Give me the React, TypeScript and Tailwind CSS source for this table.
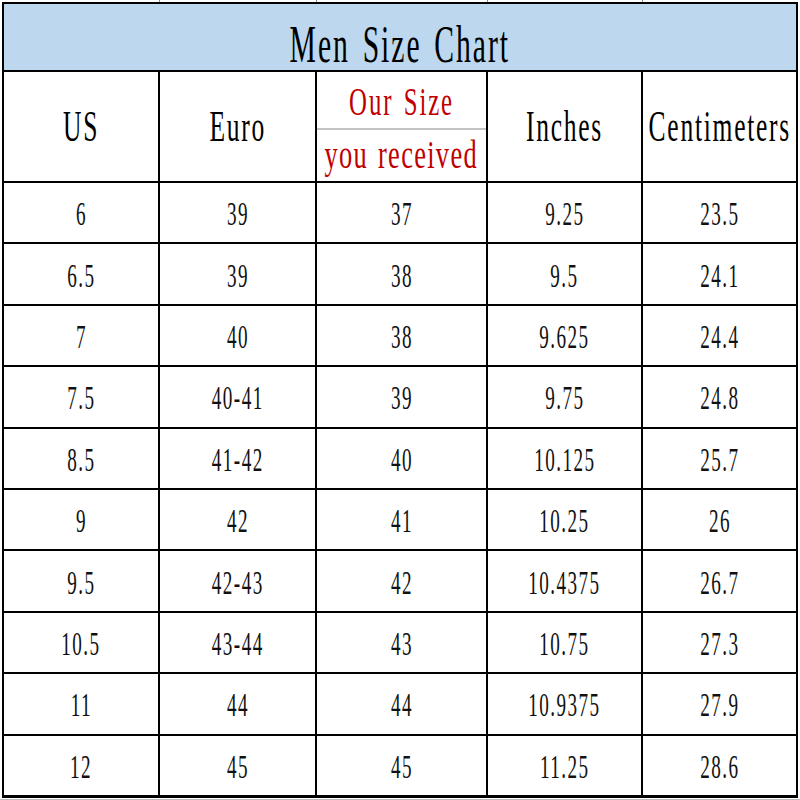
import React from "react";

const rows: string[][] = [
  ["6", "39", "37", "9.25", "23.5"],
  ["6.5", "39", "38", "9.5", "24.1"],
  ["7", "40", "38", "9.625", "24.4"],
  ["7.5", "40-41", "39", "9.75", "24.8"],
  ["8.5", "41-42", "40", "10.125", "25.7"],
  ["9", "42", "41", "10.25", "26"],
  ["9.5", "42-43", "42", "10.4375", "26.7"],
  ["10.5", "43-44", "43", "10.75", "27.3"],
  ["11", "44", "44", "10.9375", "27.9"],
  ["12", "45", "45", "11.25", "28.6"],
];

const font = { fontFamily: '"Liberation Serif", "Times New Roman", serif' };

export default function App() {
  return (
    <div className="w-[800px] h-[800px] bg-white relative overflow-hidden">
      <div className="absolute left-[159px] top-0 w-[1px] h-[2px] bg-[#888]" />
      <div className="absolute left-[316px] top-0 w-[1px] h-[2px] bg-[#888]" />
      <div className="absolute left-[487px] top-0 w-[1px] h-[2px] bg-[#888]" />
      <div className="absolute left-[642px] top-0 w-[1px] h-[2px] bg-[#888]" />
      <div className="pt-[2px] pl-[2px]">
        <div
          className="w-[796px] h-[796px] bg-black pt-[2px] pl-[2px] pr-[2px] pb-[3px] grid grid-cols-[154px_155px_169px_153px_153px] grid-rows-[66px_109px_repeat(10,1fr)] gap-[2px]"
          style={font}
        >
          <div className="col-span-5 bg-[#bdd7ee] flex items-center justify-center pt-[14px]">
            <span className="inline-block scale-x-[0.56] text-[53px] leading-none text-black whitespace-nowrap tracking-[3.5px] [word-spacing:6px]">
              Men Size Chart
            </span>
          </div>
          {["US", "Euro"].map((h) => (
            <div key={h} className="bg-white flex items-center justify-center">
              <span className="inline-block scale-x-[0.58] text-[44px] leading-none text-black whitespace-nowrap tracking-[3px]">
                {h}
              </span>
            </div>
          ))}
          <div className="bg-white flex flex-col">
            <div className="flex-1 flex items-center justify-center pt-[4px]">
              <span className="inline-block scale-x-[0.62] text-[40px] leading-none text-[#c00000] whitespace-nowrap tracking-[3px] [word-spacing:4px]">
                Our Size
              </span>
            </div>
            <div className="h-[2px] bg-[#c4c4c4]" />
            <div className="flex-1 flex items-center justify-center">
              <span className="inline-block scale-x-[0.66] text-[40px] leading-none text-[#c00000] whitespace-nowrap tracking-[2px] [word-spacing:3px]">
                you received
              </span>
            </div>
          </div>
          {["Inches", "Centimeters"].map((h) => (
            <div key={h} className="bg-white flex items-center justify-center">
              <span className="inline-block scale-x-[0.58] text-[44px] leading-none text-black whitespace-nowrap tracking-[3px]">
                {h}
              </span>
            </div>
          ))}
          {rows.map((r, i) =>
            r.map((c, j) => (
              <div key={i + "-" + j} className="bg-white flex items-center justify-center pt-[4px]">
                <span className="inline-block scale-x-[0.58] text-[33px] leading-none text-[#111] whitespace-nowrap tracking-[2.5px]">
                  {c}
                </span>
              </div>
            ))
          )}
        </div>
      </div>
      <div className="absolute left-0 top-[799px] w-[800px] h-[1px] bg-[#bbb]" />
    </div>
  );
}
